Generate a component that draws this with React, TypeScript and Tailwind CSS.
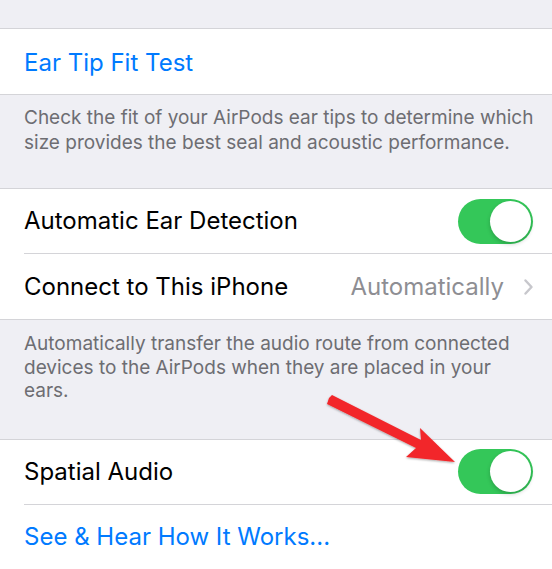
import React from 'react';

const font = { fontFamily: 'Inter, "Noto Sans", sans-serif' };

const Toggle: React.FC = () => (
  <div className="w-[75px] h-[45px] rounded-full bg-[#34c759] p-[2px] flex justify-end">
    <div className="w-[41px] h-[41px] rounded-full bg-white shadow-[0_2px_4px_rgba(0,0,0,0.2)]" />
  </div>
);

const Row: React.FC<{ inset?: boolean; children: React.ReactNode }> = ({ inset, children }) => (
  <div className="bg-white pl-6">
    <div
      className={
        'h-[65px] flex items-center justify-between pr-[19px] ' +
        (inset ? 'border-b border-[#d4d4d8]' : '')
      }
    >
      {children}
    </div>
  </div>
);

const Footer: React.FC<{ className: string; children: React.ReactNode }> = ({ className, children }) => (
  <p className={'pl-6 pr-4 text-[19px] text-[#6d6d72] ' + className}>{children}</p>
);

const App: React.FC = () => {
  return (
    <div className="relative w-[552px] h-[569px] overflow-hidden bg-[#efeff4]" style={font}>
      <div className="h-[28px]" />

      {/* Ear tip */}
      <div className="border-y border-[#d4d4d8]">
        <Row>
          <span className="text-[24px] text-[#007aff] pt-[2px]">Ear Tip Fit Test</span>
        </Row>
      </div>
      <Footer className="pt-[10px] pb-[33px] leading-[25px]">
        Check the fit of your AirPods ear tips to determine which size provides the best seal and acoustic performance.
      </Footer>

      {/* Connection */}
      <div className="border-y border-[#d4d4d8]">
        <Row inset>
          <span className="text-[24px] text-black">Automatic Ear Detection</span>
          <Toggle />
        </Row>
        <Row>
          <span className="text-[24px] text-black">Connect to This iPhone</span>
          <span className="flex items-center gap-[20px] text-[24px] text-[#8e8e93]">
            Automatically
            <svg width="9" height="16" viewBox="0 0 9 16" fill="none">
              <path d="M1.5 1.5L7.5 8L1.5 14.5" stroke="#c7c7cc" strokeWidth="2.4" strokeLinecap="round" strokeLinejoin="round" />
            </svg>
          </span>
        </Row>
      </div>
      <Footer className="pt-[12px] pb-[36px] leading-[23.5px]">
        Automatically transfer the audio route from connected devices to the AirPods when they are placed in your ears.
      </Footer>

      {/* Spatial audio */}
      <div className="border-y border-[#d4d4d8]">
        <Row inset>
          <span className="text-[24px] text-black">Spatial Audio</span>
          <Toggle />
        </Row>
        <Row>
          <span className="text-[24px] text-[#007aff]">See &amp; Hear How It Works...</span>
        </Row>
      </div>

      {/* red pointer */}
      <svg className="absolute inset-0 pointer-events-none" width="552" height="569" viewBox="0 0 552 569">
        <defs>
          <filter id="sh" x="-20%" y="-20%" width="140%" height="140%">
            <feDropShadow dx="0" dy="1" stdDeviation="1" floodColor="#000" floodOpacity="0.35" />
          </filter>
        </defs>
        <polygon
          filter="url(#sh)"
          fill="#f2272a"
          points="329,398 332,395 421,440 420,428 455,462 406,457 416,448 327,404"
        />
      </svg>
    </div>
  );
};

export default App;
